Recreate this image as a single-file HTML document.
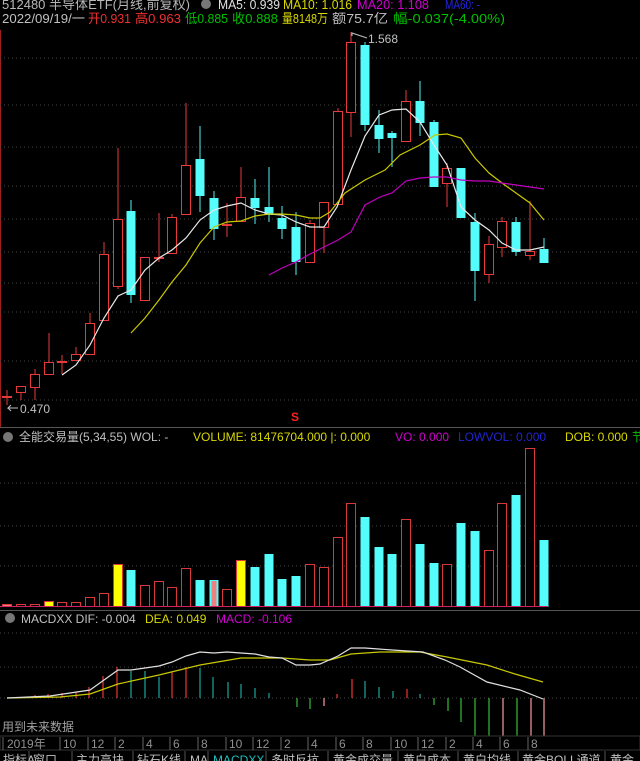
<!DOCTYPE html>
<html><head><meta charset="utf-8"><style>
html,body{margin:0;padding:0;background:#000;width:640px;height:761px;overflow:hidden}
svg{display:block}
text{font-family:"Liberation Sans","Noto Sans CJK SC",sans-serif;font-size:12px}
.h{font-size:13px}
</style></head><body>
<svg width="640" height="761" viewBox="0 0 640 761" xmlns="http://www.w3.org/2000/svg">
<rect width="640" height="761" fill="#000"/>
<!-- header -->
<text class="h" x="2" y="9" fill="#b8b8b8" textLength="188" lengthAdjust="spacingAndGlyphs">512480 半导体ETF(月线,前复权)</text>
<circle cx="206" cy="4" r="5" fill="#777"/>
<text class="h" x="218" y="9" fill="#e0e0e0" textLength="62" lengthAdjust="spacingAndGlyphs">MA5: 0.939</text>
<text class="h" x="283" y="9" fill="#d8d800" textLength="69" lengthAdjust="spacingAndGlyphs">MA10: 1.016</text>
<text class="h" x="357" y="9" fill="#d000d0" textLength="72" lengthAdjust="spacingAndGlyphs">MA20: 1.108</text>
<text class="h" x="445" y="9" fill="#2424e0" textLength="35" lengthAdjust="spacingAndGlyphs">MA60: -</text>
<text class="h" x="2" y="23" fill="#c0c0c0" textLength="83" lengthAdjust="spacingAndGlyphs">2022/09/19/一</text>
<text class="h" x="88" y="23" fill="#f03030" textLength="43" lengthAdjust="spacingAndGlyphs">开0.931</text>
<text class="h" x="135" y="23" fill="#f03030" textLength="46" lengthAdjust="spacingAndGlyphs">高0.963</text>
<text class="h" x="185" y="23" fill="#00c000" textLength="43" lengthAdjust="spacingAndGlyphs">低0.885</text>
<text class="h" x="232" y="23" fill="#00c000" textLength="46" lengthAdjust="spacingAndGlyphs">收0.888</text>
<text class="h" x="282" y="23" fill="#d8d800" textLength="46" lengthAdjust="spacingAndGlyphs">量8148万</text>
<text class="h" x="332" y="23" fill="#c0c0c0" textLength="56" lengthAdjust="spacingAndGlyphs">额75.7亿</text>
<text class="h" x="393" y="23" fill="#00c000" textLength="112" lengthAdjust="spacingAndGlyphs">幅-0.037(-4.00%)</text>
<line x1="0.5" y1="30" x2="0.5" y2="427" stroke="#a02020"/>
<!-- grid main -->
<g stroke="#444" stroke-dasharray="1,3">
<line x1="0" y1="58" x2="640" y2="58"/><line x1="0" y1="105" x2="640" y2="105"/>
<line x1="0" y1="147" x2="640" y2="147"/><line x1="0" y1="186" x2="640" y2="186"/>
<line x1="0" y1="219" x2="640" y2="219"/><line x1="0" y1="252" x2="640" y2="252"/>
<line x1="0" y1="283" x2="640" y2="283"/><line x1="0" y1="312" x2="640" y2="312"/>
<line x1="0" y1="361" x2="640" y2="361"/><line x1="0" y1="400" x2="640" y2="400"/>
</g>
<!-- candles -->
<g stroke-width="1">
<g stroke="#e83a3a" fill="#000">
<line x1="7" y1="390" x2="7" y2="405"/><rect x="2.5" y="396.5" width="9" height="1"/>
<line x1="21" y1="386" x2="21" y2="400"/><rect x="16.5" y="386.5" width="9" height="6"/>
<line x1="35" y1="369" x2="35" y2="400"/><rect x="30.5" y="374.5" width="9" height="13"/>
<line x1="49" y1="333" x2="49" y2="362"/><rect x="44.5" y="362.5" width="9" height="12"/>
<line x1="62" y1="355" x2="62" y2="374"/><rect x="57.5" y="361.5" width="9" height="1"/>
<line x1="76" y1="347" x2="76" y2="354"/><rect x="71.5" y="354.5" width="9" height="6"/>
<line x1="90" y1="313" x2="90" y2="323"/><rect x="85.5" y="323.5" width="9" height="31"/>
<line x1="104" y1="242" x2="104" y2="254"/><rect x="99.5" y="254.5" width="9" height="66"/>
<line x1="118" y1="148" x2="118" y2="219"/><rect x="113.5" y="219.5" width="9" height="67"/><line x1="118" y1="286" x2="118" y2="289"/>
<rect x="140.5" y="257.5" width="9" height="43"/>
<line x1="159" y1="213" x2="159" y2="262"/><rect x="154.5" y="257.5" width="9" height="1"/>
<line x1="172" y1="214" x2="172" y2="217"/><rect x="167.5" y="217.5" width="9" height="36"/>
<line x1="186" y1="103" x2="186" y2="165"/><rect x="181.5" y="165.5" width="9" height="49"/>
<line x1="227" y1="203" x2="227" y2="237"/><rect x="222.5" y="224.5" width="9" height="1"/>
<line x1="241" y1="167" x2="241" y2="197"/><rect x="236.5" y="197.5" width="9" height="24"/>
<line x1="310" y1="220" x2="310" y2="223"/><rect x="305.5" y="223.5" width="9" height="39"/>
<line x1="324" y1="227" x2="324" y2="253"/><rect x="319.5" y="202.5" width="9" height="25"/>
<line x1="338" y1="108" x2="338" y2="111"/><rect x="333.5" y="111.5" width="9" height="93"/>
<line x1="351" y1="32" x2="351" y2="42"/><line x1="351" y1="112" x2="351" y2="137"/><rect x="346.5" y="42.5" width="9" height="70"/>
<line x1="406" y1="90" x2="406" y2="101"/><rect x="401.5" y="101.5" width="9" height="40"/>
<line x1="447" y1="163" x2="447" y2="207"/><rect x="442.5" y="168.5" width="9" height="15"/>
<line x1="489" y1="236" x2="489" y2="283"/><rect x="484.5" y="244.5" width="9" height="30"/>
<line x1="502" y1="217" x2="502" y2="257"/><rect x="497.5" y="221.5" width="9" height="26"/>
<line x1="530" y1="201" x2="530" y2="260"/><rect x="525.5" y="251.5" width="9" height="4"/>
</g>
<g stroke="#54f0f0" fill="#54fcfc">
<line x1="131" y1="200" x2="131" y2="303"/><rect x="126.5" y="211" width="9" height="84" stroke="none"/>
<line x1="200" y1="126" x2="200" y2="212"/><rect x="195.5" y="159" width="9" height="37" stroke="none"/>
<line x1="214" y1="191" x2="214" y2="240"/><rect x="209.5" y="198" width="9" height="31" stroke="none"/>
<line x1="255" y1="179" x2="255" y2="224"/><rect x="250.5" y="198" width="9" height="10" stroke="none"/>
<line x1="269" y1="167" x2="269" y2="222"/><rect x="264.5" y="207" width="9" height="8" stroke="none"/>
<line x1="282" y1="206" x2="282" y2="239"/><rect x="277.5" y="218" width="9" height="11" stroke="none"/>
<line x1="296" y1="212" x2="296" y2="275"/><rect x="291.5" y="227" width="9" height="35" stroke="none"/>
<line x1="365" y1="42" x2="365" y2="131"/><rect x="360.5" y="45" width="9" height="80" stroke="none"/>
<line x1="379" y1="110" x2="379" y2="153"/><rect x="374.5" y="125" width="9" height="14" stroke="none"/>
<line x1="392" y1="131" x2="392" y2="167"/><rect x="387.5" y="133" width="9" height="5" stroke="none"/>
<line x1="420" y1="81" x2="420" y2="136"/><rect x="415.5" y="101" width="9" height="22" stroke="none"/>
<line x1="434" y1="120" x2="434" y2="187"/><rect x="429.5" y="122" width="9" height="65" stroke="none"/>
<rect x="456.5" y="168" width="9" height="50" stroke="none"/>
<line x1="475" y1="213" x2="475" y2="301"/><rect x="470.5" y="222" width="9" height="49" stroke="none"/>
<line x1="516" y1="217" x2="516" y2="256"/><rect x="511.5" y="222" width="9" height="30" stroke="none"/>
<line x1="544" y1="238" x2="544" y2="263"/><rect x="539.5" y="249" width="9" height="14" stroke="none"/>
</g>
</g>
<!-- MAs -->
<polyline fill="none" stroke="#e8e8e8" stroke-width="1.2" points="62,375 76,365 90,345 104,318 118,296 131,290 145,270 159,258 172,250 186,238 200,220 214,210 227,206 241,203 255,210 269,214 282,215 296,222 310,227 324,227 337,207 351,170 365,136 379,115 392,110 406,109 420,122 434,145 447,165 461,207 475,220 489,230 502,243 516,250 530,250 544,247"/>
<polyline fill="none" stroke="#c8c800" stroke-width="1.2" points="131,333 145,318 159,300 172,282 186,265 200,243 214,227 227,222 241,221 255,216 269,214 282,214 296,215 310,218 320,218 330,212 345,193 365,180 385,170 400,155 420,145 435,135 447,134 461,138 475,158 489,173 502,183 516,193 530,203 544,220"/>
<polyline fill="none" stroke="#c000c0" stroke-width="1.2" points="269,275 282,268 296,262 310,254 324,247 338,240 351,232 365,205 380,197 392,193 406,181 420,178 434,177 447,177 461,180 475,181 489,181 502,183 516,185 530,187 544,189"/>
<text x="368" y="43" fill="#c0c0c0">1.568</text>
<polyline points="352,36 352,33 367,38" fill="none" stroke="#c0c0c0"/>
<text x="20" y="413" fill="#c0c0c0">0.470</text>
<polyline points="18,408 8,408 11,405 8,408 11,411" fill="none" stroke="#c0c0c0"/>
<text x="291" y="421" fill="#ff2020" font-size="9" font-weight="bold">S</text>
<line x1="0" y1="427.5" x2="640" y2="427.5" stroke="#555"/>
<!-- volume header -->
<circle cx="8" cy="437" r="5" fill="#777"/>
<text x="19" y="441" fill="#c0c0c0">全能交易量(5,34,55) WOL: -</text>
<text x="193" y="441" fill="#d8d800">VOLUME: 81476704.000 |: 0.000</text>
<text x="395" y="441" fill="#d000d0">VO: 0.000</text>
<text x="458" y="441" fill="#2424d0">LOWVOL: 0.000</text>
<text x="565" y="441" fill="#d8d800">DOB: 0.000</text>
<text x="632" y="441" fill="#00c000">节</text>
<g stroke="#444" stroke-dasharray="1,3">
<line x1="0" y1="483" x2="640" y2="483"/><line x1="0" y1="526" x2="640" y2="526"/><line x1="0" y1="566" x2="640" y2="566"/>
</g>
<g stroke="#d83838" fill="#000">
<rect x="2.5" y="604.5" width="9" height="2" fill="#f08080"/>
<rect x="16.5" y="604.5" width="9" height="2"/><rect x="30.5" y="604.5" width="9" height="2"/>
<rect x="44.5" y="601.5" width="9" height="5" fill="#ffff00"/>
<rect x="57.5" y="602.5" width="9" height="4"/><rect x="71.5" y="602.5" width="9" height="4"/>
<rect x="85.5" y="597.5" width="9" height="9"/><rect x="99.5" y="593.5" width="9" height="13"/>
<rect x="113.5" y="564.5" width="9" height="42" fill="#ffff00"/>
<rect x="140.5" y="585.5" width="9" height="21"/><rect x="154.5" y="581.5" width="9" height="25"/>
<rect x="167.5" y="587.5" width="9" height="19"/><rect x="181.5" y="568.5" width="9" height="38"/>
<rect x="222.5" y="589.5" width="9" height="17"/>
<rect x="236.5" y="560.5" width="9" height="46" fill="#ffff00"/>
<rect x="305.5" y="564.5" width="9" height="42"/><rect x="319.5" y="567.5" width="9" height="39"/>
<rect x="333.5" y="537.5" width="9" height="69"/><rect x="346.5" y="503.5" width="9" height="103"/>
<rect x="401.5" y="519.5" width="9" height="87"/><rect x="442.5" y="564.5" width="9" height="42"/>
<rect x="484.5" y="550.5" width="9" height="56"/><rect x="497.5" y="503.5" width="9" height="103"/>
<rect x="525.5" y="448.5" width="9" height="158"/>
</g>
<g fill="#54fcfc">
<rect x="126.5" y="570" width="9" height="37"/><rect x="195.5" y="580" width="9" height="27"/>
<rect x="209.5" y="580" width="9" height="27"/><rect x="250.5" y="567" width="9" height="40"/>
<rect x="264.5" y="554" width="9" height="53"/><rect x="277.5" y="579" width="9" height="28"/>
<rect x="291.5" y="576" width="9" height="31"/><rect x="360.5" y="517" width="9" height="90"/>
<rect x="374.5" y="547" width="9" height="60"/><rect x="387.5" y="554" width="9" height="53"/>
<rect x="415.5" y="544" width="9" height="63"/><rect x="429.5" y="563" width="9" height="44"/>
<rect x="456.5" y="523" width="9" height="84"/><rect x="470.5" y="531" width="9" height="76"/>
<rect x="511.5" y="495" width="9" height="112"/><rect x="539.5" y="540" width="9" height="67"/>
</g>
<rect x="211.5" y="581" width="5" height="26" fill="#f08080"/>
<line x1="0" y1="606.5" x2="548" y2="606.5" stroke="#d02060"/>
<line x1="0" y1="610.5" x2="640" y2="610.5" stroke="#555"/>
<!-- MACD -->
<circle cx="10" cy="618" r="5" fill="#777"/>
<text x="21" y="623" fill="#c0c0c0">MACDXX DIF: -0.004</text>
<text x="145" y="623" fill="#d8d800">DEA: 0.049</text>
<text x="216" y="623" fill="#d000d0">MACD: -0.106</text>
<g stroke="#444" stroke-dasharray="1,3">
<line x1="0" y1="633" x2="640" y2="633"/><line x1="0" y1="667" x2="640" y2="667"/><line x1="0" y1="698" x2="640" y2="698"/>
</g>
<g stroke-width="1.3">
<g stroke="#e03030">
<line x1="35" y1="698" x2="35" y2="695"/><line x1="48" y1="698" x2="48" y2="694"/><line x1="62" y1="698" x2="62" y2="693"/>
<line x1="76" y1="698" x2="76" y2="692"/><line x1="89" y1="698" x2="89" y2="687"/><line x1="103" y1="698" x2="103" y2="676"/>
<line x1="117" y1="698" x2="117" y2="667"/><line x1="172" y1="698" x2="172" y2="672"/><line x1="186" y1="698" x2="186" y2="667"/>
<line x1="337" y1="698" x2="337" y2="694"/><line x1="352" y1="698" x2="352" y2="679"/><line x1="407" y1="698" x2="407" y2="689"/>
</g>
<g stroke="#1a9a90">
<line x1="131" y1="698" x2="131" y2="671"/><line x1="145" y1="698" x2="145" y2="671"/><line x1="159" y1="698" x2="159" y2="677"/>
<line x1="200" y1="698" x2="200" y2="668"/><line x1="213" y1="698" x2="213" y2="677"/><line x1="228" y1="698" x2="228" y2="682"/>
<line x1="241" y1="698" x2="241" y2="684"/><line x1="255" y1="698" x2="255" y2="688"/><line x1="269" y1="698" x2="269" y2="693"/>
<line x1="365" y1="698" x2="365" y2="681"/><line x1="379" y1="698" x2="379" y2="687"/><line x1="393" y1="698" x2="393" y2="691"/>
<line x1="420" y1="698" x2="420" y2="694"/>
</g>
<g stroke="#30b030">
<line x1="297" y1="698" x2="297" y2="707"/><line x1="310" y1="698" x2="310" y2="709"/>
<line x1="434" y1="698" x2="434" y2="705"/><line x1="448" y1="698" x2="448" y2="711"/><line x1="461" y1="698" x2="461" y2="722"/>
<line x1="475" y1="698" x2="475" y2="736"/><line x1="489" y1="698" x2="489" y2="741"/><line x1="517" y1="698" x2="517" y2="740"/>
</g>
<g stroke="#e89090">
<line x1="324" y1="698" x2="324" y2="706"/><line x1="503" y1="698" x2="503" y2="739"/><line x1="531" y1="698" x2="531" y2="739"/><line x1="544" y1="698" x2="544" y2="736"/>
</g>
</g>
<polyline fill="none" stroke="#c8c800" stroke-width="1.2" points="7,698 60,697 90,694 118,684 159,675 200,665 241,658 282,658 296,659 310,660 330,660 351,654 380,652 420,652 447,657 487,665 515,674 543,682"/>
<polyline fill="none" stroke="#e0e0e0" stroke-width="1.2" points="7,698 50,696 90,690 104,680 118,670 131,670 159,666 172,662 186,656 200,652 214,653 227,652 255,654 269,657 282,658 296,665 310,665 320,664 338,656 351,648 365,648 392,650 423,652 445,660 460,667 487,682 520,690 543,699"/>
<text x="2" y="731" fill="#a0a0a0">用到未来数据</text>
<!-- time axis -->
<rect x="0" y="736" width="640" height="14" fill="#000" stroke="#333"/>
<g stroke="#666">
<line x1="3" y1="737" x2="3" y2="750"/><line x1="60" y1="737" x2="60" y2="750"/><line x1="88" y1="737" x2="88" y2="750"/>
<line x1="115" y1="737" x2="115" y2="750"/><line x1="143" y1="737" x2="143" y2="750"/><line x1="170" y1="737" x2="170" y2="750"/>
<line x1="198" y1="737" x2="198" y2="750"/><line x1="226" y1="737" x2="226" y2="750"/><line x1="253" y1="737" x2="253" y2="750"/>
<line x1="281" y1="737" x2="281" y2="750"/><line x1="308" y1="737" x2="308" y2="750"/><line x1="336" y1="737" x2="336" y2="750"/>
<line x1="363" y1="737" x2="363" y2="750"/><line x1="391" y1="737" x2="391" y2="750"/><line x1="418" y1="737" x2="418" y2="750"/>
<line x1="446" y1="737" x2="446" y2="750"/><line x1="473" y1="737" x2="473" y2="750"/><line x1="500" y1="737" x2="500" y2="750"/>
<line x1="528" y1="737" x2="528" y2="750"/>
</g>
<g fill="#909090">
<text x="7" y="748">2019年</text><text x="63" y="748">10</text><text x="91" y="748">12</text><text x="118" y="748">2</text>
<text x="146" y="748">4</text><text x="173" y="748">6</text><text x="201" y="748">8</text><text x="229" y="748">10</text>
<text x="256" y="748">12</text><text x="284" y="748">2</text><text x="311" y="748">4</text><text x="339" y="748">6</text>
<text x="366" y="748">8</text><text x="394" y="748">10</text><text x="421" y="748">12</text><text x="449" y="748">2</text>
<text x="476" y="748">4</text><text x="503" y="748">6</text><text x="531" y="748">8</text>
</g>
<!-- tabs -->
<g stroke="#555">
<line x1="29" y1="751" x2="29" y2="761"/><line x1="72" y1="751" x2="72" y2="761"/><line x1="133" y1="751" x2="133" y2="761"/>
<line x1="185" y1="751" x2="185" y2="761"/><line x1="208" y1="751" x2="208" y2="761"/><line x1="266" y1="751" x2="266" y2="761"/>
<line x1="328" y1="751" x2="328" y2="761"/><line x1="398" y1="751" x2="398" y2="761"/><line x1="458" y1="751" x2="458" y2="761"/>
<line x1="518" y1="751" x2="518" y2="761"/><line x1="605" y1="751" x2="605" y2="761"/>
</g>
<g fill="#c0c0c0">
<text x="3" y="764">指标A</text><text x="33" y="764">窗口</text><text x="76" y="764">主力高块</text>
<text x="137" y="764">钻石K线</text><text x="190" y="764">MA</text><text x="213" y="764" fill="#20c0c0">MACDXX</text>
<text x="271" y="764">多时反抗</text><text x="333" y="764">黄金成交量</text><text x="403" y="764">黄白成本</text>
<text x="463" y="764">黄白均线</text><text x="522" y="764">黄金BOLL通道</text><text x="610" y="764">黄金</text>
</g>
</svg>
</body></html>
